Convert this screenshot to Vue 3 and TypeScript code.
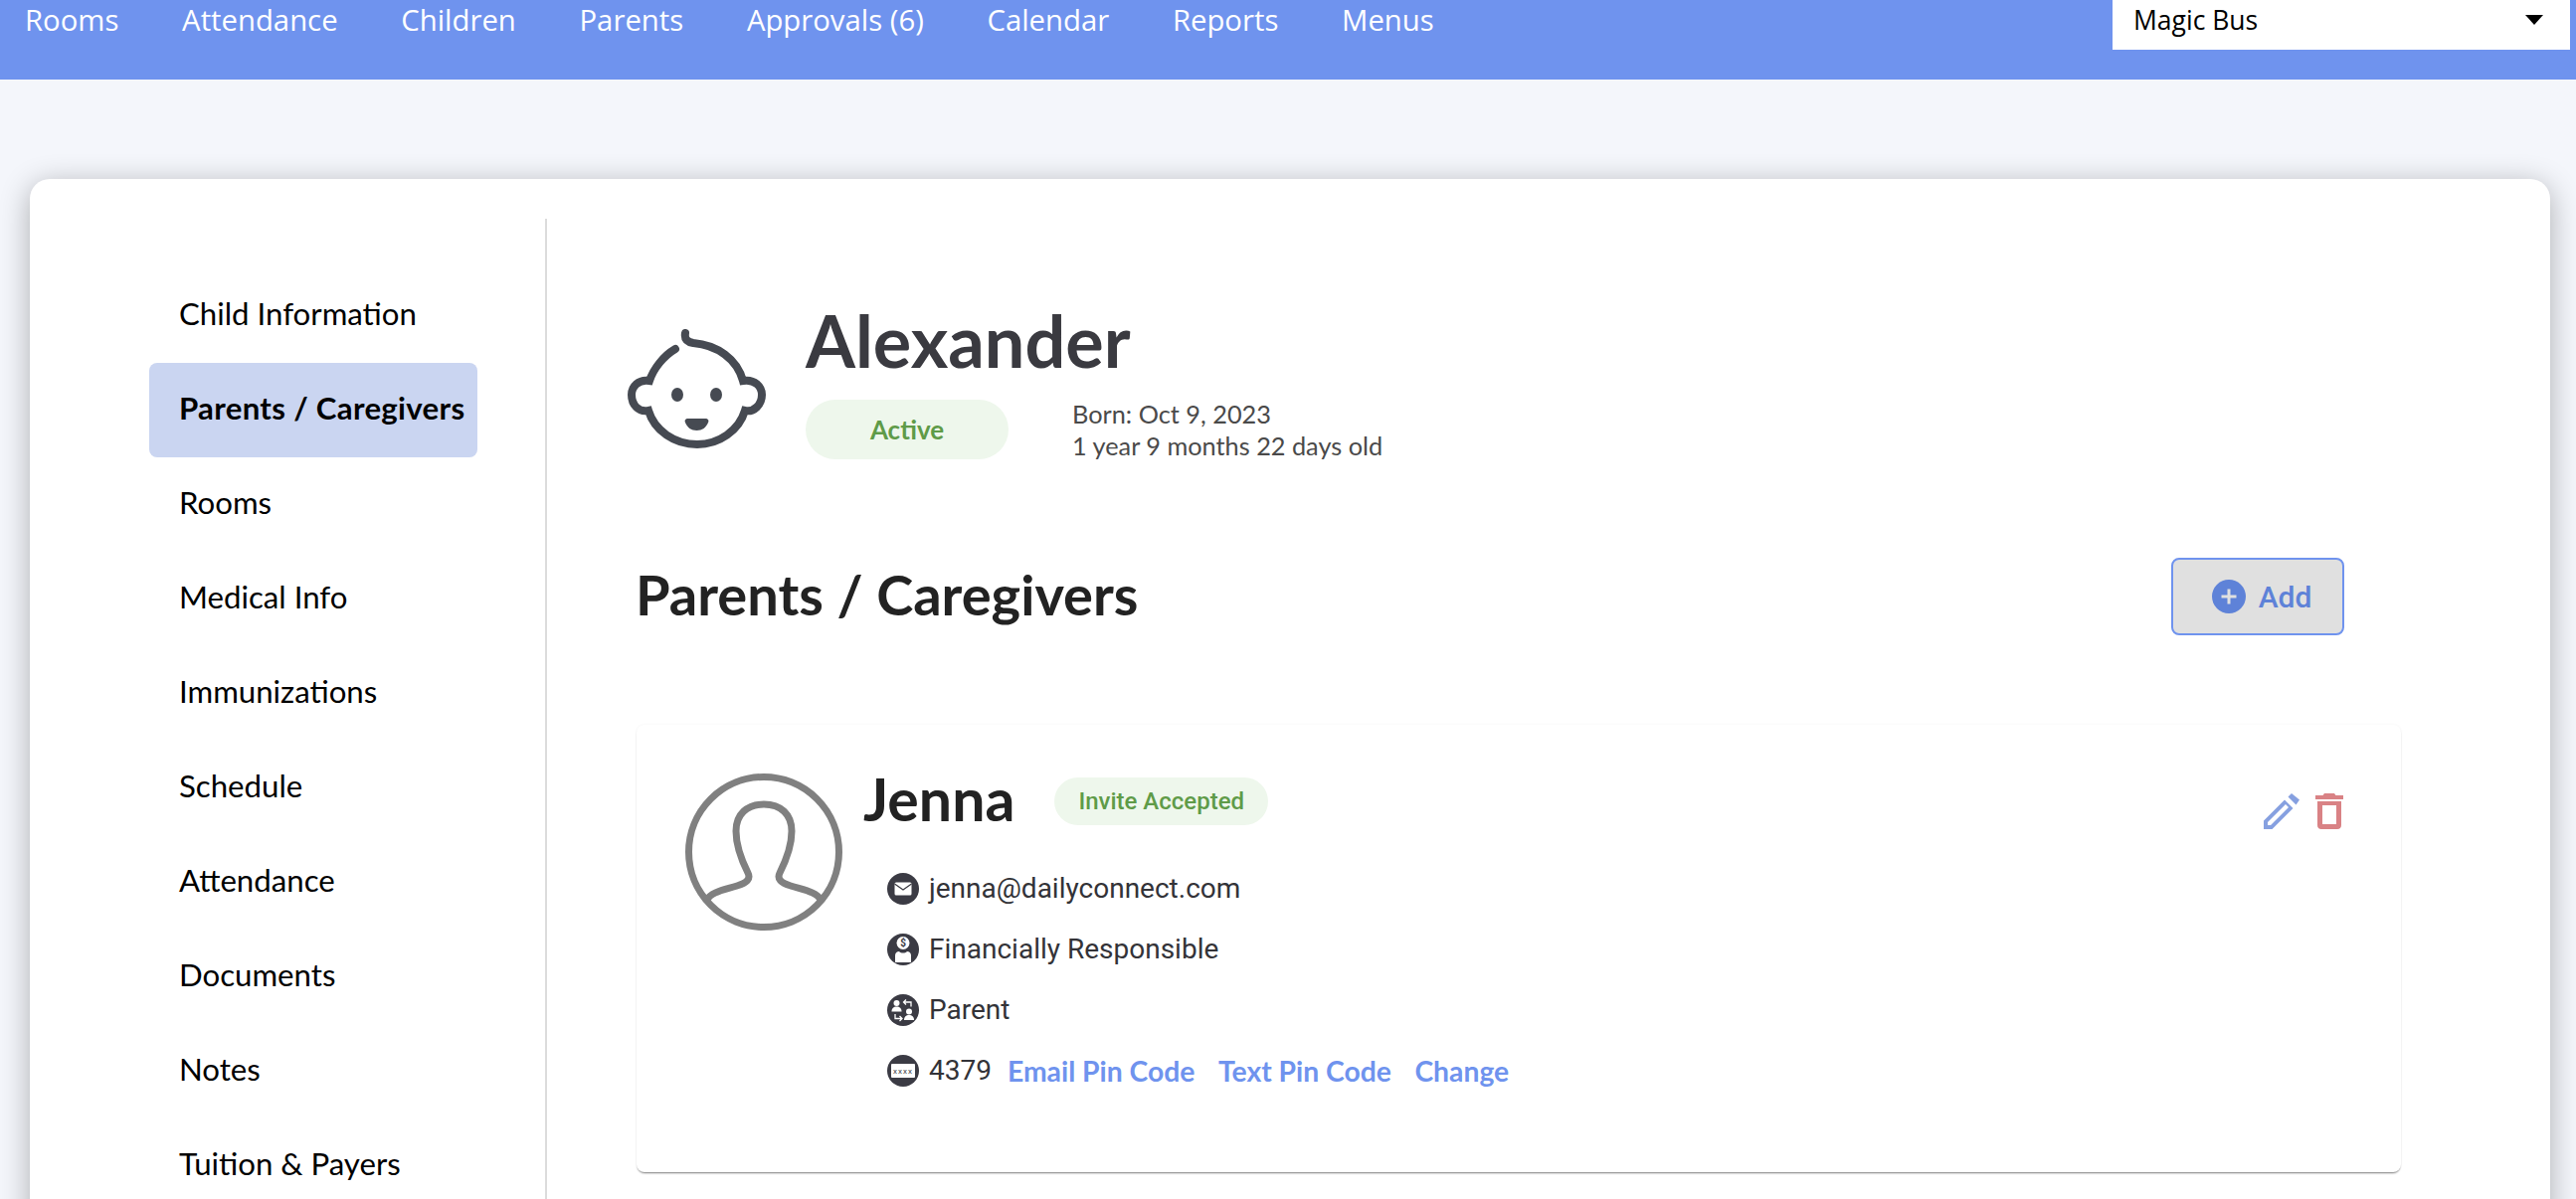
<script setup lang="ts">
const navLinks = ['Rooms', 'Attendance', 'Children', 'Parents', 'Approvals (6)', 'Calendar', 'Reports', 'Menus']

const sideLinks = [
  'Child Information',
  'Parents / Caregivers',
  'Rooms',
  'Medical Info',
  'Immunizations',
  'Schedule',
  'Attendance',
  'Documents',
  'Notes',
  'Tuition & Payers',
]

const activeLink = 'Parents / Caregivers'
</script>

<template>
  <div class="page">
    <header class="topbar">
      <nav class="topbar__nav">
        <a v-for="link in navLinks" :key="link" class="topbar__link">{{ link }}</a>
      </nav>
      <div class="school-select">
        <span>Magic Bus</span>
        <i class="school-select__caret"></i>
      </div>
    </header>

    <main class="main">
      <section class="sheet">
        <aside class="sidebar">
          <a
            v-for="link in sideLinks"
            :key="link"
            class="sidebar__item"
            :class="{ 'sidebar__item--active': link === activeLink }"
          >{{ link }}</a>
        </aside>

        <div class="content">
          <div class="child">
            <svg class="child__icon" viewBox="0 0 139 120" fill="none">
              <path
                d="M58 4C57 10 60 13 66 14C90 16 110 30 116 52C128 50 135 58 135 66C135 76 127 84 118 82C112 102 92 116 70 116C47 116 27 102 21 82C11 84 4 76 4 66C4 58 11 50 22 52C26 40 36 27 48 20"
                stroke="#464a52"
                stroke-width="8"
                stroke-linecap="round"
              />
              <ellipse cx="50" cy="66" rx="6" ry="7" fill="#464a52" />
              <ellipse cx="89" cy="66" rx="6" ry="7" fill="#464a52" />
              <path d="M61 90H78C81 90 82 92 81 94C79 99 75 102 69.500 102C64 102 60 99 58 94C57 92 58 90 61 90Z" fill="#464a52" />
            </svg>
            <div class="child__info">
              <h1 class="child__name">Alexander</h1>
              <div class="child__meta">
                <span class="child__status">Active</span>
                <div class="child__born">
                  <div>Born: Oct 9, 2023</div>
                  <div>1 year 9 months 22 days old</div>
                </div>
              </div>
            </div>
          </div>

          <div class="section-head">
            <h2 class="section-head__title">Parents / Caregivers</h2>
            <button type="button" class="add-btn">
              <svg width="34" height="34" viewBox="0 0 34 34">
                <circle cx="17" cy="17" r="17" fill="#5e82d8" />
                <path d="M17 9.500V24.500M9.500 17H24.500" stroke="#e0e0e0" stroke-width="3" />
              </svg>
              <span>Add</span>
            </button>
          </div>

          <article class="person">
            <svg class="person__avatar" viewBox="0 0 158 158" fill="none" stroke="#808080" stroke-width="7">
              <circle cx="79" cy="79" r="75.500" />
              <path d="M22 127C26 119 40 117 52 113C62 110 66 106 63 100C57 88 51 73 51 58C51 41 62 31 79 31C96 31 107 41 107 58C107 73 101 88 95 100C92 106 96 110 106 113C118 117 132 119 136 127" />
            </svg>

            <div class="person__body">
              <div class="person__title">
                <h3 class="person__name">Jenna</h3>
                <span class="person__badge">Invite Accepted</span>
              </div>

              <div class="person__row">
                <svg class="person__glyph" viewBox="0 0 32 32">
                  <circle cx="16" cy="16" r="16" fill="#3b3b44" />
                  <rect x="7.500" y="9.500" width="17" height="13" rx="1.500" fill="#fff" />
                  <path d="M7.500 11L16 17L24.500 11" fill="none" stroke="#3b3b44" stroke-width="1.300" />
                </svg>
                <span>jenna@dailyconnect.com</span>
              </div>

              <div class="person__row">
                <svg class="person__glyph" viewBox="0 0 32 32">
                  <circle cx="16" cy="16" r="16" fill="#3b3b44" />
                  <circle cx="16" cy="9.500" r="6.500" fill="#fff" />
                  <text x="16" y="13" text-anchor="middle" class="person__dollar">$</text>
                  <path d="M8 29V22C8 19.500 10 18 12 18C14 20 18 20 20 18C22 18 24 19.500 24 22V29Z" fill="#fff" />
                </svg>
                <span>Financially Responsible</span>
              </div>

              <div class="person__row">
                <svg class="person__glyph" viewBox="0 0 32 32">
                  <circle cx="16" cy="16" r="16" fill="#3b3b44" />
                  <circle cx="9.500" cy="9" r="3" fill="#fff" />
                  <path d="M4.500 17.500C4.500 14 6.500 12.500 9.500 12.500C12.500 12.500 14.500 14 14.500 17.500Z" fill="#fff" />
                  <circle cx="22" cy="17.500" r="3" fill="#fff" />
                  <path d="M17 26C17 22.500 19 21 22 21C25 21 27 22.500 27 26Z" fill="#fff" />
                  <path d="M24 12.500V8H17M19 5.500L16.500 8L19 10.500M8 20V24.500H14.500M12.500 22L15 24.500L12.500 27" fill="none" stroke="#fff" stroke-width="1.300" />
                </svg>
                <span>Parent</span>
              </div>

              <div class="person__row">
                <svg class="person__glyph" viewBox="0 0 32 32">
                  <circle cx="16" cy="16" r="16" fill="#3b3b44" />
                  <rect x="4" y="9" width="24" height="14" rx="1" fill="#fff" />
                  <text x="16" y="19" text-anchor="middle" class="person__pin">xxxx</text>
                </svg>
                <span>4379</span>
                <a class="person__action">Email Pin Code</a>
                <a class="person__action">Text Pin Code</a>
                <a class="person__action">Change</a>
              </div>
            </div>

            <div class="person__tools">
              <svg width="36" height="36" viewBox="0 0 36 36" fill="#86a0e0">
                <path d="M0 27.500L21 6.500L29.500 15L8.500 36H0ZM4 29V32H7L25 14L22 11Z" fill-rule="evenodd" />
                <path d="M24.500 3.500L28 0L36 6.500L32.500 11.500Z" />
              </svg>
              <svg width="28" height="36" viewBox="0 0 28 36" fill="#d98285">
                <path d="M9 0H19L20.500 2H28V6H0V2H7.500Z" />
                <path d="M2 8H26V32C26 34.500 24.500 36 22 36H6C3.500 36 2 34.500 2 32ZM7 12V31H21V12Z" fill-rule="evenodd" />
              </svg>
            </div>
          </article>
        </div>
      </section>
    </main>
  </div>
</template>

<style>
html,
body {
  margin: 0;
  height: 1206px;
  overflow: hidden;
  background: #f4f6fb;
}
</style>

<style scoped>
.page {
  height: 1206px;
  overflow: hidden;
  font-family: Lato, 'Open Sans', sans-serif;
}

.topbar {
  display: flex;
  justify-content: space-between;
  align-items: flex-start;
  height: 80px;
  padding: 0 6px 0 25px;
  box-sizing: border-box;
  background: #6f93ee;
}

.topbar__nav {
  display: flex;
  gap: 63.700px;
}

.topbar__link {
  font-family: 'Open Sans', sans-serif;
  font-size: 29.300px;
  line-height: 40px;
  color: #fff;
}

.school-select {
  display: flex;
  justify-content: space-between;
  align-items: center;
  width: 460px;
  height: 50px;
  padding: 0 27px 10px 21px;
  box-sizing: border-box;
  background: #fff;
  font-family: 'Open Sans', sans-serif;
  font-size: 26.500px;
  color: #000;
}

.school-select__caret {
  width: 0;
  height: 0;
  border-left: 9px solid transparent;
  border-right: 9px solid transparent;
  border-top: 10px solid #000;
}

.main {
  padding: 100px 26px 0 30px;
}

.sheet {
  display: flex;
  height: 1100px;
  padding-top: 40px;
  box-sizing: border-box;
  background: #fff;
  border-radius: 20px;
  box-shadow: 0 6px 30px rgba(0, 0, 0, 0.3);
}

.sidebar {
  display: flex;
  flex-direction: column;
  width: 400px;
  margin-left: 120px;
  padding-top: 50px;
  border-right: 2px solid #dcdcdc;
  box-sizing: border-box;
  flex: none;
}

.sidebar__item {
  display: flex;
  align-items: center;
  flex: none;
  width: 330px;
  height: 95px;
  padding: 0 0 6px 30px;
  box-sizing: border-box;
  border-radius: 8px;
  font-size: 31.200px;
  color: #000;
}

.sidebar__item--active {
  background: #cad5f1;
  font-weight: 700;
  letter-spacing: 0.3px;
}

.content {
  flex: 1;
  padding: 83px 150px 0 81px;
}

.child {
  display: flex;
  gap: 40px;
}

.child__icon {
  width: 139px;
  height: 120px;
  margin-top: 28px;
  flex: none;
}

.child__name {
  margin: 0;
  font-size: 72px;
  line-height: 78px;
  font-weight: 700;
  color: #3a3a40;
}

.child__meta {
  display: flex;
  align-items: center;
  gap: 64px;
  margin-top: 19px;
}

.child__status {
  width: 204px;
  height: 60px;
  border-radius: 30px;
  background: #eef7ec;
  color: #5f9b48;
  font-size: 26px;
  font-weight: 700;
  line-height: 60px;
  text-align: center;
}

.child__born {
  font-size: 25.300px;
  line-height: 32px;
  color: #4a4a4a;
}

.section-head {
  display: flex;
  justify-content: space-between;
  align-items: center;
  height: 78px;
  margin-top: 97px;
  padding: 0 57px 0 8px;
}

.section-head__title {
  margin: 0 0 6px;
  font-size: 56px;
  font-weight: 700;
  color: #222;
}

.add-btn {
  display: flex;
  align-items: center;
  justify-content: center;
  gap: 13px;
  width: 174px;
  height: 78px;
  padding-left: 14px;
  border: 2px solid #6f93ee;
  border-radius: 8px;
  background: #e0e0e0;
  color: #5e82d8;
  font-family: Roboto, sans-serif;
  font-size: 30px;
  font-weight: 500;
}

.person {
  display: flex;
  height: 450px;
  margin: 90px 0 0 9px;
  padding: 49px 58px 0 49px;
  box-sizing: border-box;
  background: #fff;
  border-radius: 8px;
  box-shadow: 0 2px 2px -1px rgba(0, 0, 0, 0.5), 0 0 3px rgba(0, 0, 0, 0.05);
}

.person__avatar {
  width: 158px;
  height: 158px;
  flex: none;
}

.person__body {
  flex: 1;
  padding-left: 21px;
  font-family: Roboto, sans-serif;
  font-size: 28px;
  color: #333338;
}

.person__title {
  display: flex;
  align-items: center;
  height: 48px;
  margin: 4px 0 33px;
  gap: 40px;
}

.person__name {
  margin: 0 0 6px;
  font-family: Lato, sans-serif;
  font-size: 59px;
  font-weight: 700;
  color: #222;
}

.person__badge {
  padding: 0 24px;
  border-radius: 24px;
  background: #eef7ec;
  color: #5f9b48;
  font-size: 24px;
  font-weight: 500;
  line-height: 48px;
}

.person__row {
  display: flex;
  align-items: center;
  gap: 10px;
  height: 61px;
  margin-left: 24px;
}

.person__glyph {
  width: 32px;
  height: 32px;
  flex: none;
}

.person__dollar {
  font-family: Roboto, sans-serif;
  font-size: 10px;
  font-weight: 700;
  fill: #3b3b44;
}

.person__pin {
  font-family: Roboto, sans-serif;
  font-size: 8px;
  fill: #3b3b44;
  letter-spacing: 1px;
}

.person__action {
  margin-left: 6px;
  margin-right: 7.500px;
  font-family: Lato, sans-serif;
  font-size: 28.300px;
  font-weight: 700;
  color: #6f93ee;
}

.person__tools {
  display: flex;
  gap: 16px;
  margin-top: 20px;
}
</style>
